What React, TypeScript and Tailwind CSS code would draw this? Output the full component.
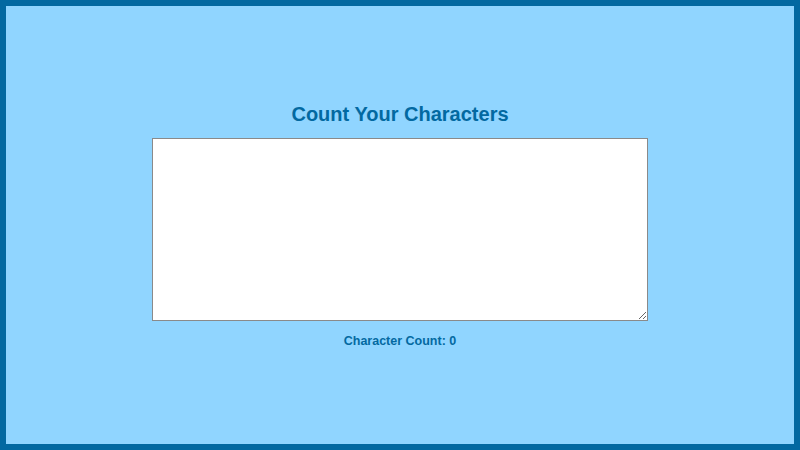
import { useState } from 'react';

const App = () => {
  const [text, setText] = useState('');

  return (
    <div className="h-screen w-full border-[6px] border-[#0369a1] bg-[#90d5ff] flex flex-col items-center justify-center font-['Liberation_Sans',Arial,sans-serif]">
      <h1 className="text-[20px] leading-[28px] font-bold text-[#0369a1] mb-[10px]">Count Your Characters</h1>
      <textarea
        value={text}
        onChange={(e) => setText(e.target.value)}
        className="w-[496px] h-[183px] bg-white border border-[#8a8a8a] outline-none p-1 text-sm"
      />
      <p className="mt-[11px] text-[12.5px] leading-[18px] font-bold text-[#0369a1]">Character Count: {text.length}</p>
    </div>
  );
};

export default App;
